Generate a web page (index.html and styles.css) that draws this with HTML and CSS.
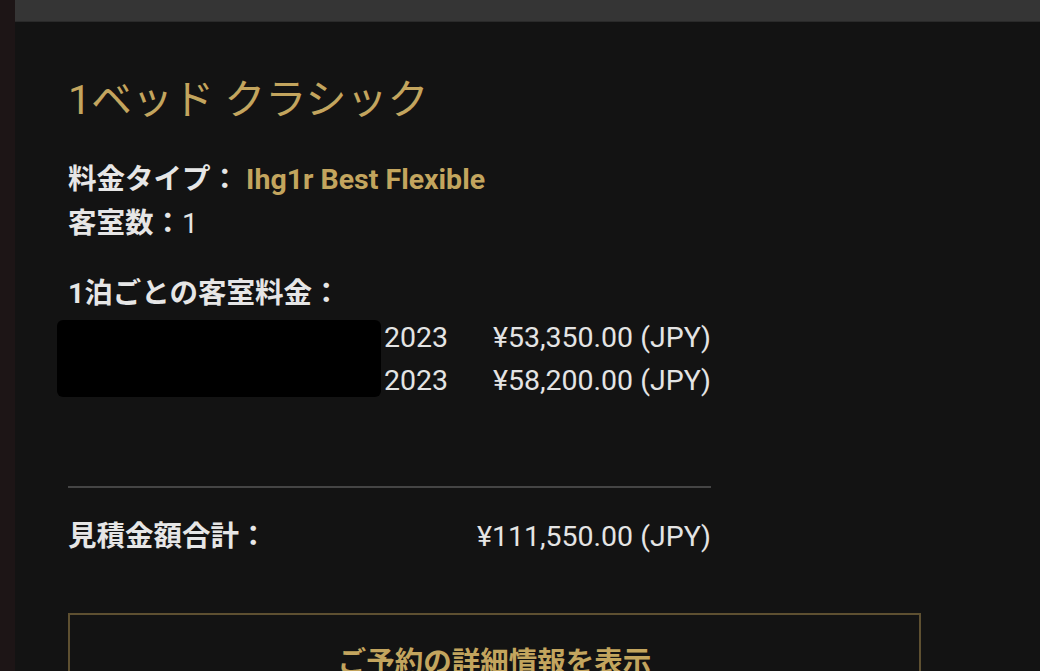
FILE: index.html
```html
<!DOCTYPE html>
<html lang="ja">
<head>
    <meta charset="UTF-8">
    <meta name="viewport" content="width=device-width, initial-scale=1.0">
    <title>ご予約内容</title>
    <link rel="stylesheet" href="styles.css">
</head>
<body>
    <div class="side"></div>
    <div class="panel">
        <div class="topbar"></div>
        <main class="content">
            <h1 class="room-name">1ベッド クラシック</h1>

            <p class="line"><span class="label">料金タイプ：</span> <span class="rate">Ihg1r Best Flexible</span></p>
            <p class="line"><span class="label">客室数：</span>1</p>

            <h2 class="nights-title">1泊ごとの客室料金：</h2>
            <div class="nights">
                <div class="night-row">
                    <span class="date">2023</span>
                    <span class="price">¥53,350.00 (JPY)</span>
                </div>
                <div class="night-row">
                    <span class="date">2023</span>
                    <span class="price">¥58,200.00 (JPY)</span>
                </div>
                <!-- dates blacked out in the original -->
                <div class="redact"></div>
            </div>

            <hr class="divider">

            <div class="total">
                <span class="label">見積金額合計：</span>
                <span class="price">¥111,550.00 (JPY)</span>
            </div>

            <button class="details-btn">ご予約の詳細情報を表示</button>
        </main>
    </div>
</body>
</html>
```

FILE: styles.css
```css
html, body {
    height: 100%;
}
body {
    margin: 0;
    display: flex;
    background-color: #131313;
    font-family: Roboto, "Noto Sans CJK JP", sans-serif;
    color: #e4e4e4;
    overflow: hidden;
}
.side {
    width: 15px;
    flex-shrink: 0;
    background: #1d1516;
}
.panel {
    flex: 1;
    display: flex;
    flex-direction: column;
}
.topbar {
    height: 21px;
    flex-shrink: 0;
    background: #353535;
    border-bottom: 1px solid #2a2a2a;
}
.content {
    padding: 54px 0 0 53px;
}
.room-name {
    margin: 0 0 34px;
    font-size: 41px;
    line-height: 48px;
    font-weight: 400;
    color: #c3a55e;
}
.line {
    margin: 0;
    font-size: 28.5px;
    line-height: 44px;
    width: 643px;
}
.label {
    font-weight: 700;
    color: #e6e6e6;
}
.rate {
    font-weight: 700;
    color: #c3a55e;
}
.nights-title {
    margin: 26px 0 0;
    font-size: 28.5px;
    line-height: 44px;
    font-weight: 700;
    color: #e6e6e6;
}
.nights {
    position: relative;
    width: 643px;
}
.night-row {
    display: flex;
    justify-content: space-between;
    font-size: 28.5px;
    line-height: 43px;
}
.date {
    width: 380px;
    text-align: right;
}
.redact {
    position: absolute;
    left: -11px;
    top: 4px;
    width: 324px;
    height: 77px;
    background: #000;
    border-radius: 6px;
}
.divider {
    width: 643px;
    margin: 84px 0 0;
    border: none;
    border-top: 2px solid #454545;
}
.total {
    display: flex;
    justify-content: space-between;
    width: 643px;
    margin-top: 27px;
    font-size: 28.5px;
    line-height: 44px;
}
.details-btn {
    display: block;
    width: 853px;
    margin-top: 54px;
    padding: 28px 0;
    background: transparent;
    border: 2px solid #5e5031;
    font-family: inherit;
    font-size: 28.5px;
    line-height: 40px;
    font-weight: 700;
    color: #c3a55e;
    cursor: pointer;
}
```
